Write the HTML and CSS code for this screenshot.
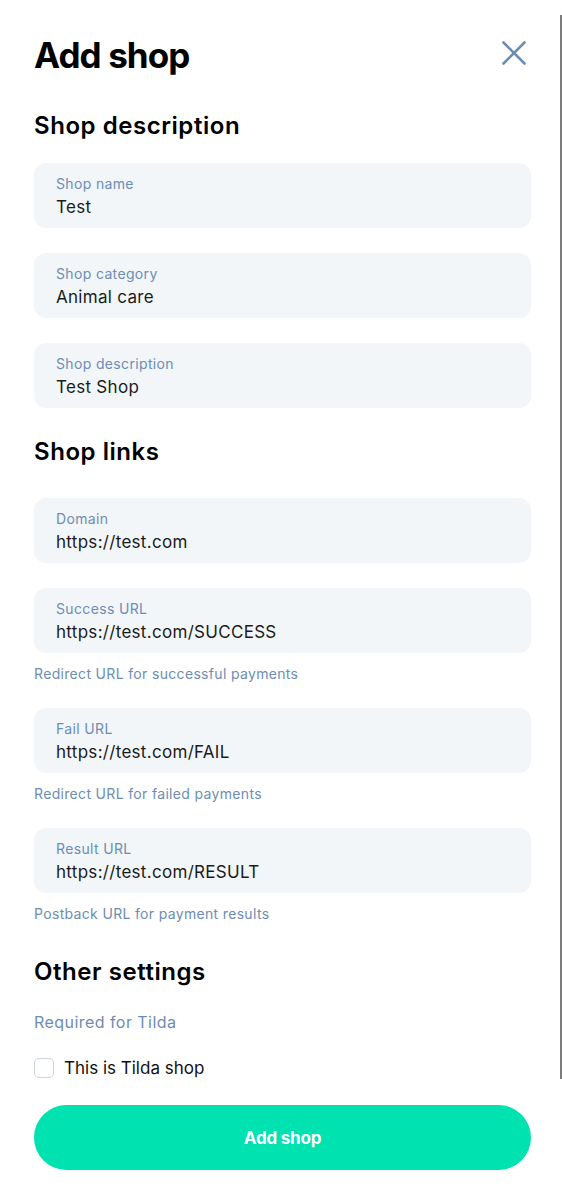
FILE: index.html
```html
<!DOCTYPE html>
<html lang="en">
<head>
<meta charset="utf-8">
<title>Add shop</title>
<link rel="stylesheet" href="styles.css">
</head>
<body>
<div class="page">
  <div class="scroll">
    <header class="header">
      <h1 class="title">Add shop</h1>
      <button class="close" aria-label="Close">
        <svg width="24" height="24" viewBox="0 0 24 24"><path d="M1.5 1.5 L22.5 22.5 M22.5 1.5 L1.5 22.5" stroke="#6c8cb2" stroke-width="2.6" stroke-linecap="round" fill="none"/></svg>
      </button>
    </header>

    <h2 class="section section-first">Shop description</h2>
    <div class="field field-first"><span class="label">Shop name</span><span class="value">Test</span></div>
    <div class="field"><span class="label">Shop category</span><span class="value">Animal care</span></div>
    <div class="field"><span class="label">Shop description</span><span class="value">Test Shop</span></div>

    <h2 class="section section-links">Shop links</h2>
    <div class="field field-links"><span class="label">Domain</span><span class="value">https://test.com</span></div>
    <div class="field"><span class="label">Success URL</span><span class="value">https://test.com/SUCCESS</span></div>
    <p class="help">Redirect URL for successful payments</p>
    <div class="field"><span class="label">Fail URL</span><span class="value">https://test.com/FAIL</span></div>
    <p class="help">Redirect URL for failed payments</p>
    <div class="field"><span class="label">Result URL</span><span class="value">https://test.com/RESULT</span></div>
    <p class="help">Postback URL for payment results</p>

    <h2 class="section section-other">Other settings</h2>
    <p class="note">Required for Tilda</p>
    <label class="check"><span class="box"></span><span class="check-text">This is Tilda shop</span></label>
  </div>
  <div class="footer">
    <button class="submit">Add shop</button>
  </div>
</div>
</body>
</html>
```

FILE: styles.css
```css
* { box-sizing: border-box; }
html, body { margin: 0; padding: 0; background: #ffffff; }
body {
  font-family: Inter, "Noto Sans", "Liberation Sans", sans-serif;
  color: #111111;
}
.page {
  width: 562px;
  padding-top: 15px;
}
.scroll {
  height: 1064px;
  width: 562px;
  padding: 18px 29px 0 34px;
  border-right: 2px solid #7c7c7c;
  overflow: hidden;
  display: flex;
  flex-direction: column;
}
.header {
  display: flex;
  align-items: center;
  justify-content: space-between;
  height: 44px;
  flex: none;
}
.title {
  margin: 0;
  font-size: 35px;
  line-height: 44px;
  font-weight: 700;
  letter-spacing: -0.9px;
  color: #000;
}
.close {
  border: 0;
  background: none;
  padding: 0;
  margin: -4px 5px 0 0;
  width: 24px;
  height: 24px;
  display: flex;
}
.section {
  margin: 0;
  font-size: 24px;
  line-height: 30px;
  font-weight: 600;
  letter-spacing: 0.55px;
  color: #000;
}
.section-first { margin-top: 34px; }
.section-links { margin-top: 29px; }
.section-other { margin-top: 34px; }
.field {
  background: #f2f6f9;
  border-radius: 12px;
  height: 65px;
  padding: 12px 22px 10px;
  display: flex;
  flex-direction: column;
  gap: 3px;
  margin-top: 25px;
  flex: none;
}
.field-first { margin-top: 22px; }
.field-links { margin-top: 31px; }
.label {
  font-size: 14px;
  line-height: 18px;
  letter-spacing: 0.35px;
  color: #6d8db4;
}
.value {
  font-size: 17px;
  line-height: 22px;
  letter-spacing: 0.3px;
  color: #1b1b1b;
}
.help {
  margin: 12px 0 0;
  font-size: 14px;
  line-height: 18px;
  letter-spacing: 0.33px;
  color: #6d8db4;
}
.note {
  margin: 25px 0 0;
  font-size: 16px;
  line-height: 20px;
  letter-spacing: 0.45px;
  color: #6d8db4;
}
.check {
  margin-top: 25px;
  display: flex;
  align-items: center;
  gap: 10px;
  height: 22px;
}
.box {
  width: 20px;
  height: 20px;
  border: 1px solid #c8d4e1;
  border-radius: 5px;
  background: #fff;
  flex: none;
}
.check-text {
  font-size: 17px;
  line-height: 22px;
  color: #111;
}
.footer {
  padding: 26px 31px 0 34px;
}
.submit {
  width: 497px;
  height: 65px;
  border: 0;
  border-radius: 33px;
  background: #00e2b0;
  color: #fff;
  font-family: Inter, "Noto Sans", "Liberation Sans", sans-serif;
  font-size: 17px;
  font-weight: 700;
  letter-spacing: -0.2px;
  padding-top: 2px;
}
```
